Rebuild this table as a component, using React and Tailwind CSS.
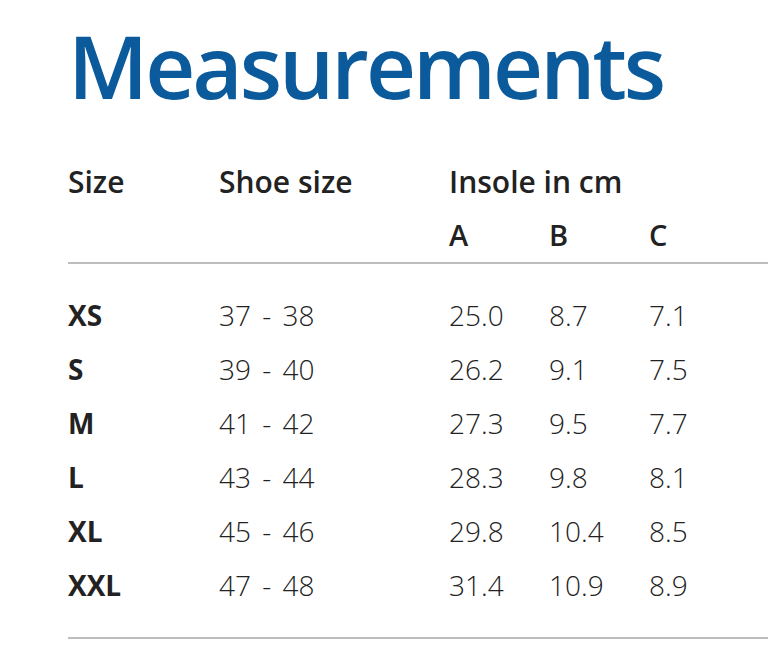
export default function App() {
  const rows = [
    ["XS", "37 - 38", "25.0", "8.7", "7.1"],
    ["S", "39 - 40", "26.2", "9.1", "7.5"],
    ["M", "41 - 42", "27.3", "9.5", "7.7"],
    ["L", "43 - 44", "28.3", "9.8", "8.1"],
    ["XL", "45 - 46", "29.8", "10.4", "8.5"],
    ["XXL", "47 - 48", "31.4", "10.9", "8.9"],
  ];
  const cols = "grid grid-cols-[151px_230px_100px_100px_1fr]";
  return (
    <div className="w-[777px] h-[668px] bg-white pl-[68px] pr-[9px] pt-[19px] text-[#222]" style={{ fontFamily: '"Open Sans", "Noto Sans", sans-serif' }}>
      <h1 className="text-[87px] leading-[92px] font-semibold text-[#0a5a9c] tracking-[-3px]">Measurements</h1>
      <div className="mt-[43px]">
        <div className={`${cols} h-[54px] items-center text-[30px] font-semibold`}>
          <div>Size</div>
          <div>Shoe size</div>
          <div className="col-span-3">Insole in cm</div>
        </div>
        <div className={`${cols} h-[54px] items-center text-[29px] font-semibold`}>
          <div></div>
          <div></div>
          <div>A</div>
          <div>B</div>
          <div>C</div>
        </div>
        <div className="border-t-2 border-[#bdbdbd] pt-[24px] pb-[25px] border-b-2">
          {rows.map((r) => (
            <div key={r[0]} className={`${cols} h-[54px] items-center text-[28px] font-light`}>
              <div className="font-bold">{r[0]}</div>
              <div className="[word-spacing:4px]">{r[1]}</div>
              <div>{r[2]}</div>
              <div>{r[3]}</div>
              <div>{r[4]}</div>
            </div>
          ))}
        </div>
      </div>
    </div>
  );
}
